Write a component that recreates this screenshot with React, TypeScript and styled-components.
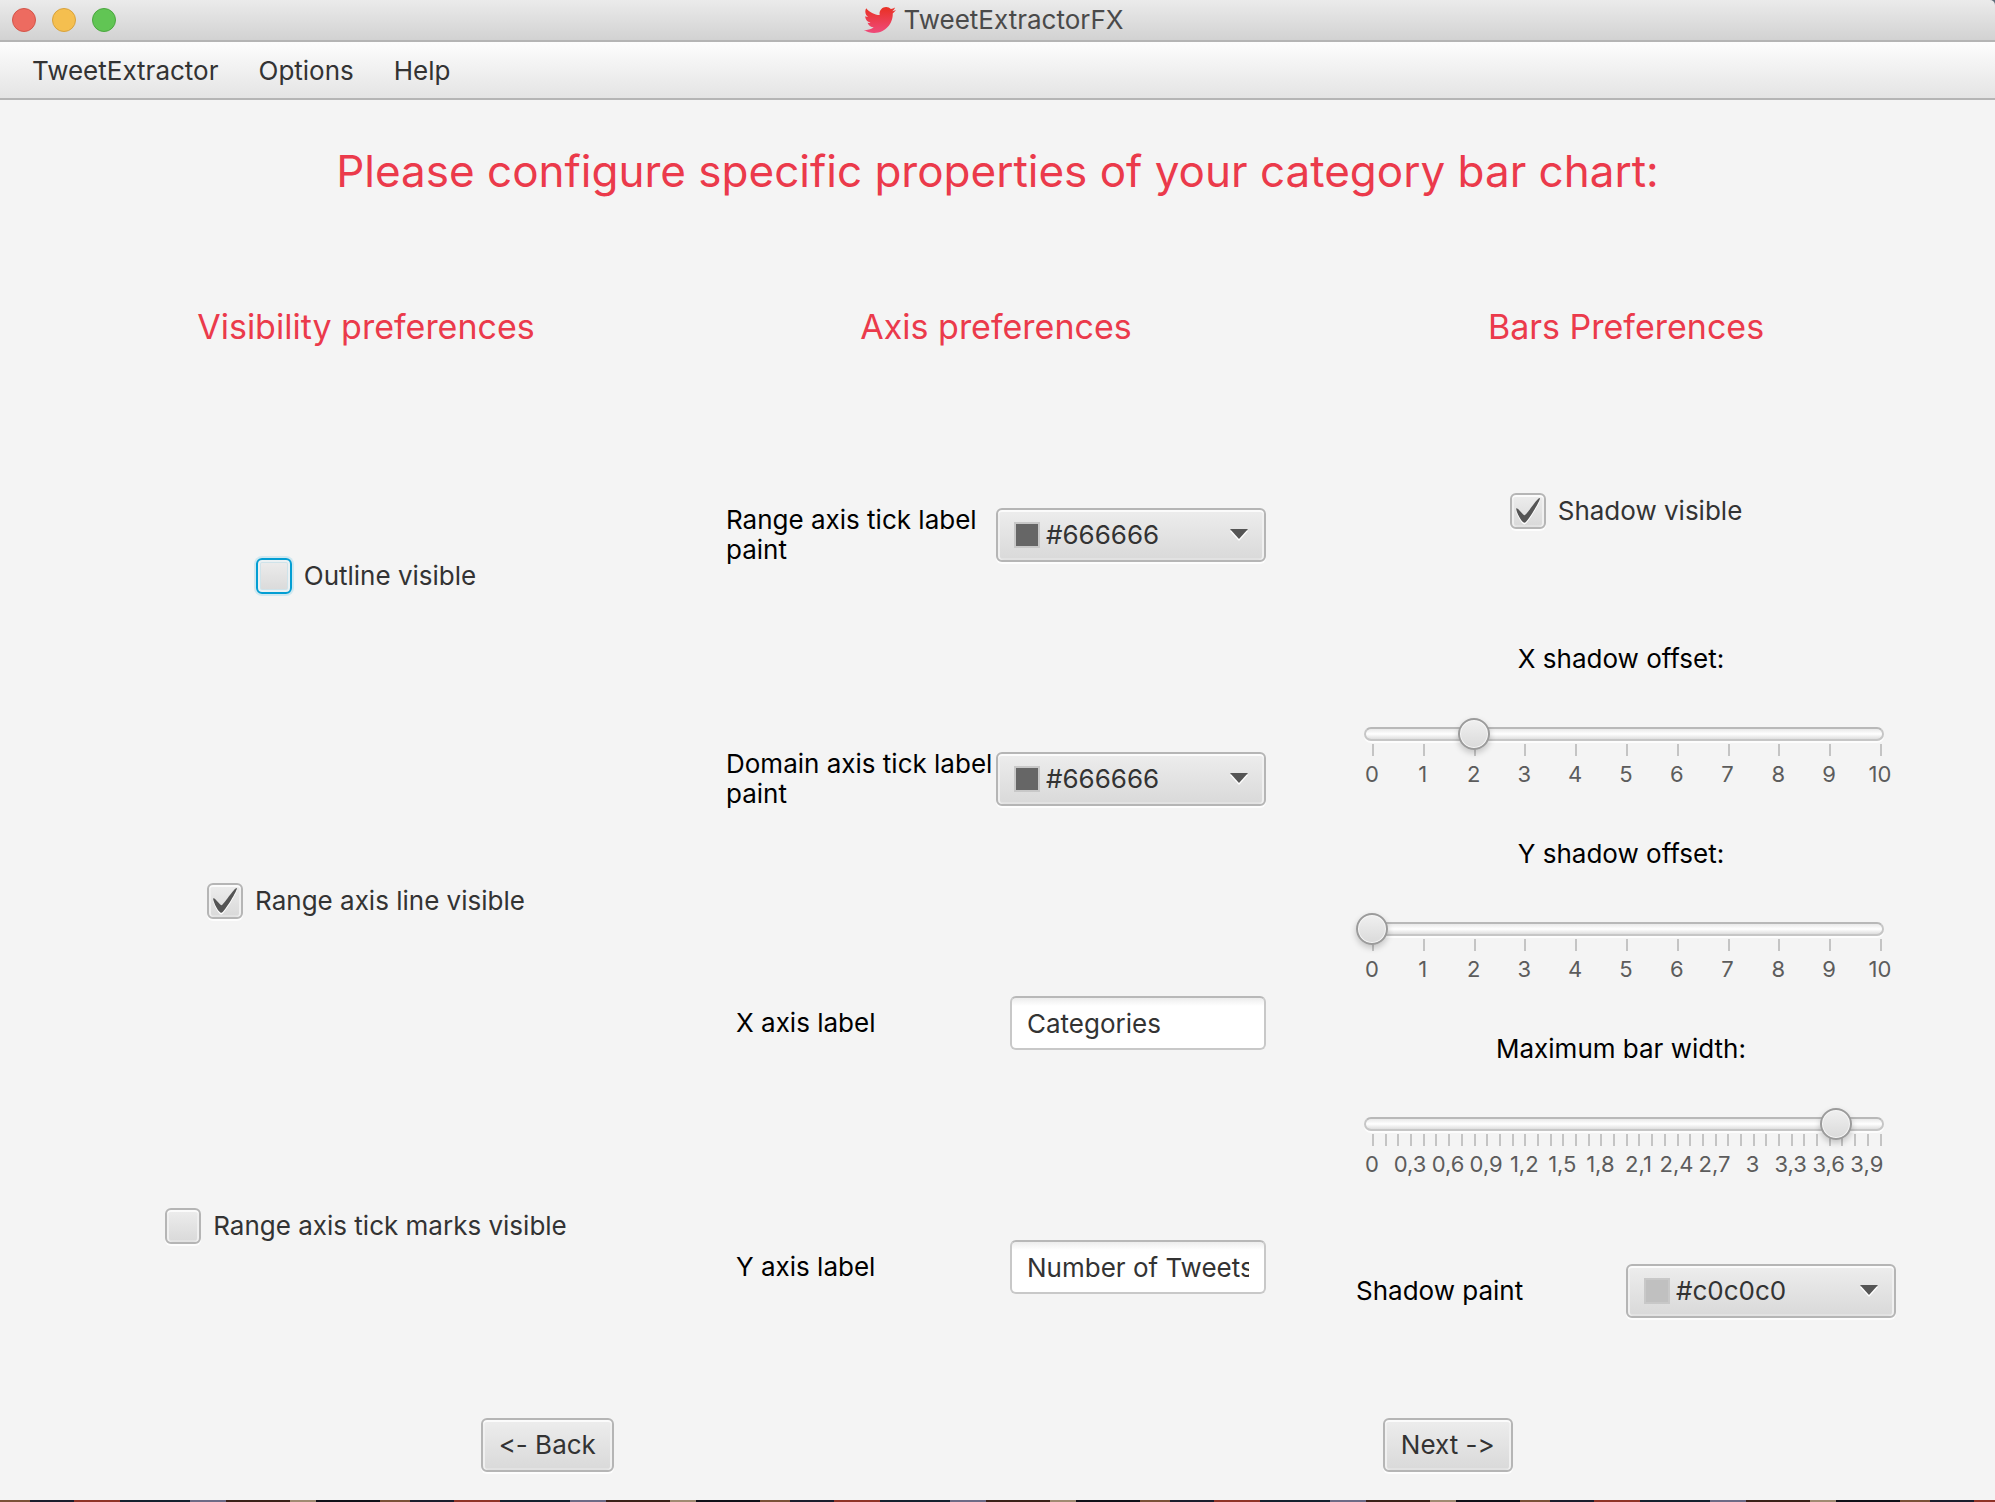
import React, { useId, useState } from "react";
import styled, { createGlobalStyle, css } from "styled-components";

const GlobalStyle = createGlobalStyle`
  *, *::before, *::after { box-sizing: border-box; }
  body {
    margin: 0;
    background: #5d6b78;
    color: #000;
    font-family: Inter, "Liberation Sans", sans-serif;
    font-size: 26px;
    line-height: 30px;
    font-variant-ligatures: none;
    font-feature-settings: "calt" 0;
  }
  button, input, select { font: inherit; font-feature-settings: inherit; margin: 0; }
`;

const raised = css`
  border: 2px solid #b5b5b5;
  border-radius: 6px;
  background: linear-gradient(#ededed, #d9d9d9);
  box-shadow: inset 0 2px 0 #fbfbfb, inset 2px 0 0 #f0f0f0,
    inset -2px 0 0 #f0f0f0, inset 0 -2px 0 #e2e2e2, 0 2px 0 #fdfdfd;
  color: #333;
`;

const Window = styled.div`
  display: flex;
  flex-direction: column;
  min-height: 100vh;
`;

const TitleBar = styled.header`
  display: flex;
  align-items: center;
  height: 42px;
  padding: 0 20px 0 12px;
  border-bottom: 2px solid #b4b4b4;
  border-radius: 0 5px 0 0;
  background: linear-gradient(#ebebeb, #d2d2d2);
`;

const Side = styled.div`
  display: flex;
  flex: 1;
  gap: 16px;
`;

const Light = styled.button<{ $fill: string; $edge: string }>`
  width: 24px;
  height: 24px;
  padding: 0;
  border: 1px solid ${(p) => p.$edge};
  border-radius: 50%;
  background: ${(p) => p.$fill};
`;

const WindowTitle = styled.div`
  display: flex;
  align-items: center;
  gap: 8px;
  color: #4a4a4a;
`;

const Bird = styled.svg`
  display: block;
  width: 32px;
  height: 32px;
`;

const MenuBar = styled.nav`
  display: flex;
  gap: 40px;
  height: 58px;
  padding: 2px 32px 0;
  align-items: center;
  border-bottom: 2px solid #b5b5b5;
  background: linear-gradient(#fdfdfd, #e4e4e4);
`;

const MenuItem = styled.button`
  padding: 0;
  border: 0;
  background: none;
  color: #333;
`;

const Main = styled.main`
  display: flex;
  flex: 1;
  flex-direction: column;
  background: #f4f4f4;
`;

const PageTitle = styled.h1`
  margin: 0;
  padding: 42px 24px;
  color: #eb3a4b;
  font-size: 44px;
  font-weight: 400;
  line-height: 58px;
  text-align: center;
`;

const Columns = styled.div`
  display: grid;
  flex: 1;
  grid-template-columns: repeat(3, 1fr);
  padding: 0 54px 0 51px;
`;

const Column = styled.section`
  display: flex;
  flex-direction: column;
`;

const SectionTitle = styled.h2`
  margin: 0;
  padding: 64px 0 65px;
  color: #eb3a4b;
  font-size: 34px;
  font-weight: 400;
  line-height: 42px;
  text-align: center;
`;

const Rows = styled.div<{ $count: number }>`
  display: grid;
  flex: 1;
  grid-template-rows: repeat(${(p) => p.$count}, 1fr);
  width: 100%;
  max-width: 540px;
  margin: 0 auto;
  align-items: center;
`;

const CheckRow = styled.label`
  display: flex;
  justify-content: center;
  align-items: center;
  gap: 12px;
  color: #333;
`;

const CheckCell = styled.span`
  display: grid;
  place-items: center;
  width: 36px;
  height: 36px;
`;

const CheckInput = styled.input<{ $focused?: boolean }>`
  ${raised}
  grid-area: 1 / 1;
  width: 36px;
  height: 36px;
  appearance: none;
  outline: none;
  ${(p) =>
    p.$focused &&
    css`
      border-color: #039ed3;
      box-shadow: inset 0 0 0 2px #ecf1f3, inset 0 0 0 3px #cfe3ea, 0 0 0 2px #d0e8f0;
    `}
`;

const Tick = styled.svg`
  grid-area: 1 / 1;
  width: 24px;
  height: 25px;
  overflow: visible;
  pointer-events: none;
`;

const Pair = styled.div`
  display: grid;
  grid-template-columns: 1fr 1fr;
  align-items: center;
`;

const PairLabel = styled.label<{ $inset?: boolean }>`
  padding-left: ${(p) => (p.$inset ? 10 : 0)}px;
`;

const TextField = styled.input`
  width: 256px;
  height: 54px;
  padding: 0 15px;
  justify-self: end;
  border: 2px solid #c8c8c8;
  border-top-color: #b8b8b8;
  border-radius: 6px;
  background: linear-gradient(#ededed, #fff 8px);
  color: #333;
  outline: none;
`;

const PickerBox = styled.div`
  display: grid;
  align-items: center;
`;

const PickerSelect = styled.select`
  ${raised}
  grid-area: 1 / 1;
  width: 100%;
  height: 54px;
  padding: 0 48px;
  appearance: none;
  outline: none;
`;

const Swatch = styled.span<{ $color: string }>`
  grid-area: 1 / 1;
  z-index: 1;
  width: 26px;
  height: 26px;
  margin-left: 18px;
  border: 2px solid #c8c8c8;
  background: ${(p) => p.$color};
  pointer-events: none;
`;

const Arrow = styled.svg`
  grid-area: 1 / 1;
  z-index: 1;
  width: 18px;
  height: 12px;
  margin-right: 18px;
  justify-self: end;
  pointer-events: none;
`;

const SliderRow = styled.div`
  display: grid;
  grid-template-rows: 1fr 1fr;
  height: 100%;
  align-items: center;
`;

const SliderLabel = styled.label`
  padding: 4px 10px 0 0;
  text-align: center;
`;

const RailCell = styled.div`
  display: grid;
  align-items: center;
  height: 32px;
`;

const Rail = styled.span`
  grid-area: 1 / 1;
  height: 14px;
  margin: 0 12px 0 8px;
  border: 2px solid #c6c6c6;
  border-top-color: #b8b8b8;
  border-radius: 7px;
  background: linear-gradient(#e9e9e9, #fff 50%, #dedede);
  box-shadow: 0 2px 0 #fdfdfd;
`;

const thumb = css`
  width: 32px;
  height: 32px;
  border: 2px solid #9b9b9b;
  border-radius: 50%;
  background: linear-gradient(#f0f0f0, #dadada);
  box-shadow: inset 0 0 0 1px #f6f6f6, 0 3px 6px rgba(0, 0, 0, 0.2);
`;

const RangeInput = styled.input`
  grid-area: 1 / 1;
  z-index: 1;
  width: 100%;
  height: 32px;
  appearance: none;
  background: none;
  outline: none;
  &::-webkit-slider-thumb {
    appearance: none;
    ${thumb}
  }
  &::-moz-range-thumb {
    ${thumb}
  }
`;

const TickMarks = styled.div`
  display: flex;
  justify-content: space-between;
  height: 12px;
  margin-top: -6px;
  padding: 0 14px 0 16px;
`;

const TickMark = styled.span`
  width: 2px;
  background: #c4c4c4;
`;

const TickLabels = styled.div`
  display: flex;
  justify-content: space-between;
  height: 30px;
  margin-top: 5px;
  padding: 0 16px;
  color: #5c5c5c;
  font-size: 22px;
  line-height: 26px;
`;

const TickLabel = styled.span`
  display: flex;
  justify-content: center;
  width: 0;
  white-space: nowrap;
`;

const Footer = styled.footer`
  display: grid;
  grid-template-columns: 1fr 1fr;
  justify-items: center;
  padding: 29px 97px 28px;
`;

const Button = styled.button`
  ${raised}
  height: 54px;
  padding: 0 16px;
`;

const Wallpaper = styled.div`
  height: 2px;
  background: repeating-linear-gradient(
    90deg,
    #7a5238 0 30px,
    #1a1c2c 30px 74px,
    #8f3327 74px 120px,
    #14202e 120px 190px,
    #6d6a86 190px 226px,
    #3a2118 226px 290px,
    #a08a72 290px 316px,
    #101018 316px 380px
  );
`;

type CheckProps = { label: string; initial: boolean; focused?: boolean };

function Check({ label, initial, focused }: CheckProps) {
  const [on, setOn] = useState(initial);
  return (
    <CheckRow>
      <CheckCell>
        <CheckInput
          type="checkbox"
          checked={on}
          $focused={focused}
          onChange={(e) => setOn(e.target.checked)}
        />
        {on && (
          <Tick viewBox="-0.5 -1 16.6 17.3" aria-hidden="true">
            <path
              transform="translate(0 1.2)"
              fill="#fff"
              d="M-0.25,6.083c0.843-0.758,4.583,4.833,5.75,4.833S14.5-1.5,15.917-0.917c1.292,0.532-8.75,17.083-10.5,17.083C3,16.167-1.083,6.833-0.25,6.083z"
            />
            <path
              fill="#555"
              d="M-0.25,6.083c0.843-0.758,4.583,4.833,5.75,4.833S14.5-1.5,15.917-0.917c1.292,0.532-8.75,17.083-10.5,17.083C3,16.167-1.083,6.833-0.25,6.083z"
            />
          </Tick>
        )}
      </CheckCell>
      {label}
    </CheckRow>
  );
}

function ColorPicker({ label, color, inset }: { label: string; color: string; inset?: boolean }) {
  const id = useId();
  return (
    <Pair>
      <PairLabel htmlFor={id} $inset={inset}>
        {label}
      </PairLabel>
      <PickerBox>
        <PickerSelect id={id} defaultValue={color}>
          <option value={color}>{color}</option>
        </PickerSelect>
        <Swatch $color={color} />
        <Arrow viewBox="0 0 18 12" aria-hidden="true">
          <path d="M0 2h18l-9 10z" fill="#fff" />
          <path d="M0 0h18l-9 10z" fill="#555" />
        </Arrow>
      </PickerBox>
    </Pair>
  );
}

function Field({ label, value }: { label: string; value: string }) {
  const id = useId();
  return (
    <Pair>
      <PairLabel htmlFor={id} $inset>
        {label}
      </PairLabel>
      <TextField id={id} type="text" defaultValue={value} />
    </Pair>
  );
}

type SliderProps = { label: string; max: number; step: number; value: number; ticks: string[] };

function Slider({ label, max, step, value, ticks }: SliderProps) {
  const id = useId();
  return (
    <SliderRow>
      <SliderLabel htmlFor={id}>{label}</SliderLabel>
      <div>
        <RailCell>
          <Rail />
          <RangeInput id={id} type="range" min={0} max={max} step={step} defaultValue={value} />
        </RailCell>
        <TickMarks>
          {ticks.map((_, i) => (
            <TickMark key={i} />
          ))}
        </TickMarks>
        <TickLabels>
          {ticks.map((text, i) => (
            <TickLabel key={i}>{text}</TickLabel>
          ))}
        </TickLabels>
      </div>
    </SliderRow>
  );
}

const offsetTicks = Array.from({ length: 11 }, (_, i) => String(i));
const widthTicks = Array.from({ length: 41 }, (_, i) =>
  i % 3 === 0 ? String(i / 10).replace(".", ",") : ""
);

export default function App() {
  return (
    <Window>
      <GlobalStyle />
      <TitleBar>
        <Side>
          <Light $fill="#ed6b60" $edge="#d35549" aria-label="Close" />
          <Light $fill="#f5bf4f" $edge="#d8a23c" aria-label="Minimize" />
          <Light $fill="#61c554" $edge="#4ba73f" aria-label="Zoom" />
        </Side>
        <WindowTitle>
          <Bird viewBox="0 0 24 24" aria-hidden="true">
            <defs>
              <linearGradient id="bird" x1="0" y1="0" x2="0" y2="1">
                <stop offset="0" stopColor="#e93023" />
                <stop offset="1" stopColor="#ef4a7b" />
              </linearGradient>
            </defs>
            <path
              fill="url(#bird)"
              d="M23.954 4.569c-.885.389-1.83.654-2.825.775 1.014-.611 1.794-1.574 2.163-2.723-.951.555-2.005.959-3.127 1.184-.896-.959-2.173-1.559-3.591-1.559-2.717 0-4.92 2.203-4.92 4.917 0 .39.045.765.127 1.124C7.691 8.094 4.066 6.13 1.64 3.161c-.427.722-.666 1.561-.666 2.475 0 1.71.87 3.213 2.188 4.096-.807-.026-1.566-.248-2.228-.616v.061c0 2.385 1.693 4.374 3.946 4.827-.413.111-.849.171-1.296.171-.314 0-.615-.03-.916-.086.631 1.953 2.445 3.377 4.604 3.417-1.68 1.319-3.809 2.105-6.102 2.105-.39 0-.779-.023-1.17-.067 2.189 1.394 4.768 2.209 7.557 2.209 9.054 0 13.999-7.496 13.999-13.986 0-.209 0-.42-.015-.63.961-.689 1.8-1.56 2.46-2.548l-.047-.02z"
            />
          </Bird>
          TweetExtractorFX
        </WindowTitle>
        <Side />
      </TitleBar>
      <MenuBar>
        <MenuItem>TweetExtractor</MenuItem>
        <MenuItem>Options</MenuItem>
        <MenuItem>Help</MenuItem>
      </MenuBar>
      <Main>
        <PageTitle>Please configure specific properties of your category bar chart:</PageTitle>
        <Columns>
          <Column>
            <SectionTitle>Visibility preferences</SectionTitle>
            <Rows $count={3}>
              <Check label="Outline visible" initial={false} focused />
              <Check label="Range axis line visible" initial />
              <Check label="Range axis tick marks visible" initial={false} />
            </Rows>
          </Column>
          <Column>
            <SectionTitle>Axis preferences</SectionTitle>
            <Rows $count={4}>
              <ColorPicker label="Range axis tick label paint" color="#666666" />
              <ColorPicker label="Domain axis tick label paint" color="#666666" />
              <Field label="X axis label" value="Categories" />
              <Field label="Y axis label" value="Number of Tweets" />
            </Rows>
          </Column>
          <Column>
            <SectionTitle>Bars Preferences</SectionTitle>
            <Rows $count={5}>
              <Check label="Shadow visible" initial />
              <Slider label="X shadow offset:" max={10} step={1} value={2} ticks={offsetTicks} />
              <Slider label="Y shadow offset:" max={10} step={1} value={0} ticks={offsetTicks} />
              <Slider label="Maximum bar width:" max={4} step={0.05} value={3.65} ticks={widthTicks} />
              <ColorPicker label="Shadow paint" color="#c0c0c0" />
            </Rows>
          </Column>
        </Columns>
        <Footer>
          <Button type="button">&lt;- Back</Button>
          <Button type="button">Next -&gt;</Button>
        </Footer>
      </Main>
      <Wallpaper />
    </Window>
  );
}
